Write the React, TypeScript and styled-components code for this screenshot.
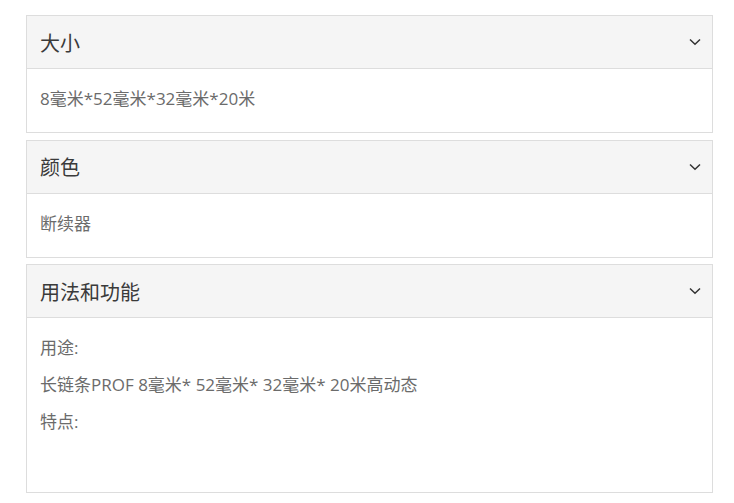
import { useState } from 'react';
import styled, { createGlobalStyle } from 'styled-components';

const GlobalStyle = createGlobalStyle`
  body {
    margin: 0;
    background: #fff;
    font-family: "Open Sans", "Noto Sans CJK SC", sans-serif;
  }
`;

interface Section {
  title: string;
  lines: string[];
}

const sections: Section[] = [
  { title: '大小', lines: ['8毫米*52毫米*32毫米*20米'] },
  { title: '颜色', lines: ['断续器'] },
  {
    title: '用法和功能',
    lines: ['用途:', '长链条PROF 8毫米* 52毫米* 32毫米* 20米高动态', '特点:', ''],
  },
];

const Chevron = () => (
  <svg width="12" height="8" viewBox="0 0 12 8" fill="none">
    <path d="M1 1.5 L6 6.2 L11 1.5" stroke="#333" strokeWidth="1.5" />
  </svg>
);

const Panel = ({ title, lines }: Section) => {
  const [open, setOpen] = useState<boolean>(true);
  return (
    <Card>
      <Header onClick={() => setOpen(!open)}>
        <Title>{title}</Title>
        <Chevron />
      </Header>
      {open && (
        <Body>
          {lines.map((line, i) => (
            <Line key={i}>{line || '\u00a0'}</Line>
          ))}
        </Body>
      )}
    </Card>
  );
};

export default function App() {
  return (
    <>
      <GlobalStyle />
      <Wrapper>
        {sections.map(s => (
          <Panel key={s.title} title={s.title} lines={s.lines} />
        ))}
      </Wrapper>
    </>
  );
}

const Wrapper = styled.div`
  width: 687px;
  padding: 15px 0 0 26px;
  display: flex;
  flex-direction: column;
  gap: 6.5px;
`;

const Card = styled.div`
  border: 1px solid #dddddd;
  background: #fff;
`;

const Header = styled.div`
  height: 52px;
  display: flex;
  align-items: center;
  justify-content: space-between;
  padding: 0 11px 0 13px;
  background: #f5f5f5;
  border-bottom: 1px solid #dddddd;
  cursor: pointer;
`;

const Title = styled.h4`
  margin: 0;
  font-size: 20px;
  font-weight: 400;
  color: #3a3a3a;
`;

const Body = styled.div`
  padding: 15px 13px 11px;
`;

const Line = styled.p`
  margin: 0 0 7px;
  line-height: 30px;
  font-size: 17px;
  color: #6b6b6b;
  &:last-child:empty,
  &:last-child {
    min-height: 30px;
  }
`;
